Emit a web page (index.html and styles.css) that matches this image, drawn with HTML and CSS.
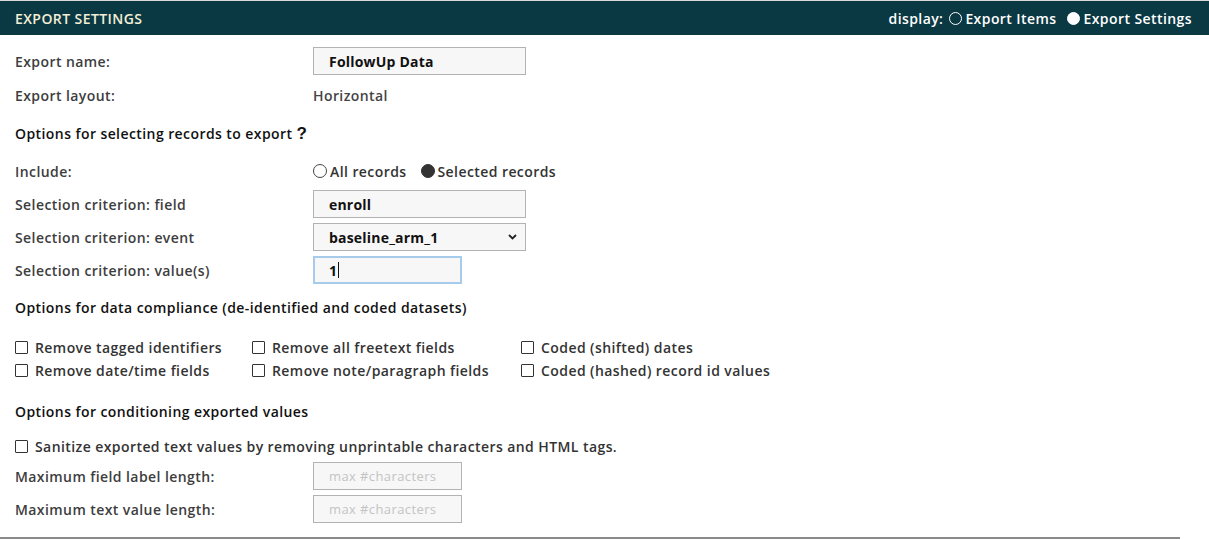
FILE: index.html
```html
<!DOCTYPE html>
<html>
<head>
<meta charset="utf-8">
<link rel="stylesheet" href="styles.css">
</head>
<body>
<div class="page">
  <div class="topbar">
    <div class="title">EXPORT SETTINGS</div>
    <div class="display">
      <span class="dlabel">display:</span>
      <span class="radio"><span class="circle"></span>Export Items</span>
      <span class="radio"><span class="circle on white"></span>Export Settings</span>
    </div>
  </div>

  <div class="content">
    <div class="row first">
      <div class="label">Export name:</div>
      <div class="field"><div class="input wide bold">FollowUp Data</div></div>
    </div>
    <div class="row">
      <div class="label">Export layout:</div>
      <div class="field value">Horizontal</div>
    </div>

    <div class="heading h1">Options for selecting records to export <span class="help">?</span></div>

    <div class="row include">
      <div class="label">Include:</div>
      <div class="field radios">
        <span class="radio dark"><span class="circle"></span>All records</span>
        <span class="radio dark"><span class="circle on"></span>Selected records</span>
      </div>
    </div>
    <div class="row">
      <div class="label">Selection criterion: field</div>
      <div class="field"><div class="input wide bold">enroll</div></div>
    </div>
    <div class="row">
      <div class="label">Selection criterion: event</div>
      <div class="field">
        <div class="input wide bold select">baseline_arm_1
          <svg class="chev" width="9" height="6" viewBox="0 0 9 6"><path d="M1 1l3.5 3.5L8 1" fill="none" stroke="#222" stroke-width="1.8"/></svg>
        </div>
      </div>
    </div>
    <div class="row">
      <div class="label">Selection criterion: value(s)</div>
      <div class="field"><div class="input narrow bold focus">1<span class="caret"></span></div></div>
    </div>

    <div class="heading h2">Options for data compliance (de-identified and coded datasets)</div>

    <div class="checks">
      <label class="cb"><span class="box"></span>Remove tagged identifiers</label>
      <label class="cb"><span class="box"></span>Remove all freetext fields</label>
      <label class="cb"><span class="box"></span>Coded (shifted) dates</label>
      <label class="cb"><span class="box"></span>Remove date/time fields</label>
      <label class="cb"><span class="box"></span>Remove note/paragraph fields</label>
      <label class="cb"><span class="box"></span>Coded (hashed) record id values</label>
    </div>

    <div class="heading h3">Options for conditioning exported values</div>

    <label class="cb sanitize"><span class="box"></span>Sanitize exported text values by removing unprintable characters and HTML tags.</label>

    <div class="row maxrow">
      <div class="label">Maximum field label length:</div>
      <div class="field"><div class="input narrow placeholder">max #characters</div></div>
    </div>
    <div class="row">
      <div class="label">Maximum text value length:</div>
      <div class="field"><div class="input narrow placeholder">max #characters</div></div>
    </div>
  </div>
  <div class="rule"></div>
</div>
</body>
</html>
```

FILE: styles.css
```css
* { box-sizing: border-box; }
html, body { margin: 0; padding: 0; background: #fff; }
body {
  font-family: "Open Sans", "Noto Sans", "DejaVu Sans", sans-serif;
  font-size: 14px;
  font-weight: 600;
  letter-spacing: 0.42px;
  color: #3d3d3d;
}
.page { width: 1209px; height: 540px; overflow: hidden; border-top: 1px solid #d8d8d8; }

.topbar {
  height: 34px;
  background: #0a3843;
  display: flex;
  align-items: center;
  justify-content: space-between;
  padding: 0 17px 0 15px;
}
.title { color: #f3efd6; font-weight: 600; }
.display { color: #fff; display: flex; align-items: center; }
.dlabel { margin-right: 6px; }
.display .radio + .radio { margin-left: 11px; }
.display .circle { margin-right: 3px; }

.radio { display: inline-flex; align-items: center; }
.circle {
  width: 13px; height: 13px; border-radius: 50%;
  border: 1px solid #fff; margin-right: 2px; display: inline-block;
}
.circle.on.white { background: #fff; }
.radio.dark .circle { width: 14px; height: 14px; border-color: #444; margin-right: 3px; }
.radio.dark .circle.on { background: #333; border-color: #333; }
.radios { display: flex; gap: 14px; color: #333; }

.content { padding-left: 15px; }
.row { display: flex; align-items: center; height: 28px; margin-top: 5px; }
.row.first { margin-top: 12px; }
.row.first + .row { margin-top: 6px; }
.label { width: 298px; flex: none; }
.field { display: flex; align-items: center; }
.value { color: #444; }

.input {
  height: 28px;
  border: 1px solid #b3b3b3;
  background: #f7f7f7;
  display: flex; align-items: center;
  padding-left: 15px;
  color: #111;
}
.wide { width: 213px; }
.narrow { width: 149px; }
.bold { font-weight: 700; letter-spacing: 0.2px; }
.select { justify-content: space-between; padding-right: 8px; }
.chev { display: block; }
.focus { border: 2px solid #a7cbea; padding-left: 14px; }
.caret { display: inline-block; width: 1px; height: 16px; background: #111; margin-left: 1px; }
.placeholder { color: #c4c4c4; font-weight: 400; font-size: 13px; letter-spacing: 0.4px; }

.heading { color: #111; font-weight: 600; height: 20px; line-height: 20px; }
.h1 { margin-top: 15px; }
.include { margin-top: 13px; }
.help { font-weight: 700; font-size: 17px; color: #111; font-family: "Liberation Sans", "DejaVu Sans", sans-serif; }
.h2 { margin-top: 14px; }
.h3 { margin-top: 20px; }

.checks {
  display: grid;
  grid-template-columns: 237px 269px auto;
  grid-auto-rows: 23px;
  margin-top: 18px;
}
.cb { display: flex; align-items: center; color: #333; }
.box {
  width: 13px; height: 13px; border: 1.5px solid #333; border-radius: 1px;
  margin-right: 7px; flex: none; background: #fff;
}
.sanitize { height: 20px; margin-top: 14px; }
.maxrow { margin-top: 6px; }

.rule { width: 1180px; height: 2px; background: #8a8a8a; margin-top: 14px; }
```
